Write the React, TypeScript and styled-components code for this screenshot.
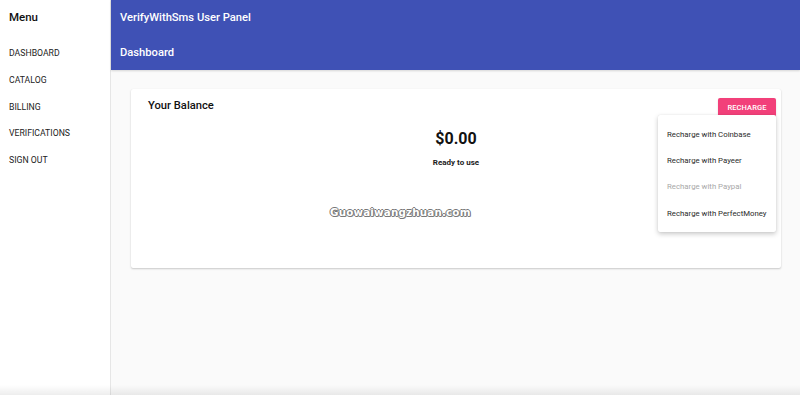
import React from "react";
import styled, { createGlobalStyle } from "styled-components";

const Global = createGlobalStyle`
  html, body { margin: 0; padding: 0; height: 100%; }
  body { font-family: Roboto, "Liberation Sans", Arial, sans-serif; background: #fafafa; overflow: hidden; }
  #root { height: 100%; }
`;

const Page = styled.div`
  display: flex;
  height: 395px;
  width: 800px;
  position: relative;
`;

const Sidebar = styled.aside`
  width: 110px;
  flex: none;
  background: #fff;
  border-right: 1px solid #e6e6e6;
  display: flex;
  flex-direction: column;
`;

const MenuTitle = styled.div`
  font-size: 11.5px;
  font-weight: 500;
  color: #111;
  padding: 10px 0 0 9px;
  height: 40px;
  box-sizing: border-box;
`;

const NavItem = styled.a`
  display: flex;
  align-items: center;
  height: 26.7px;
  padding-left: 9px;
  font-size: 8.7px;
  color: #222;
  text-transform: uppercase;
  text-decoration: none;
`;

const Main = styled.main`
  flex: 1;
  display: flex;
  flex-direction: column;
  background: #fafafa;
`;

const Header = styled.header`
  background: #3f51b5;
  height: 70px;
  display: flex;
  flex-direction: column;
  padding-left: 9px;
  box-sizing: border-box;
  box-shadow: 0 1px 2px rgba(0,0,0,0.15);
`;

const HeaderRow = styled.div<{ $h: number }>`
  height: ${(p) => p.$h}px;
  display: flex;
  align-items: center;
  color: #fff;
  font-size: 11.2px;
  font-weight: 500;
`;

const Content = styled.div`
  padding: 19px 19px 0 20px;
`;

const Card = styled.section`
  position: relative;
  background: #fff;
  height: 179px;
  border-radius: 2px;
  box-shadow: 0 1px 2px rgba(0,0,0,0.2), 0 0 1px rgba(0,0,0,0.06);
  display: flex;
  flex-direction: column;
`;

const CardHeader = styled.div`
  display: flex;
  justify-content: space-between;
  align-items: flex-start;
  padding: 6px 5px 0 17px;
`;

const CardTitle = styled.h2`
  margin: 0;
  padding-top: 4px;
  font-size: 11.2px;
  font-weight: 500;
  color: #111;
`;

const RechargeWrap = styled.div`
  position: relative;
`;

const RechargeButton = styled.button`
  width: 58px;
  height: 19px;
  background: #f2407a;
  border: none;
  border-radius: 2px;
  color: #fff;
  font-family: inherit;
  font-size: 7.5px;
  font-weight: 500;
  letter-spacing: 0.1px;
  padding: 0;
  box-shadow: 0 1px 2px rgba(0,0,0,0.15);
`;

const Dropdown = styled.ul`
  position: absolute;
  right: 0;
  top: 20px;
  width: 118px;
  margin: 0;
  padding: 6px 0 6px;
  list-style: none;
  background: #fff;
  border-radius: 2px;
  box-shadow: 0 2px 5px rgba(0,0,0,0.22), 0 0 1px rgba(0,0,0,0.12);
  z-index: 2;
`;

const DropItem = styled.li<{ $disabled?: boolean }>`
  height: 26.3px;
  display: flex;
  align-items: center;
  padding-left: 9px;
  font-size: 7.8px;
  color: ${(p) => (p.$disabled ? "#a8a8a8" : "#2a2a2a")};
  white-space: nowrap;
`;

const BalanceBlock = styled.div`
  display: flex;
  flex-direction: column;
  align-items: center;
  margin-top: 12px;
`;

const Amount = styled.div`
  font-size: 16px;
  font-weight: 700;
  color: #111;
  line-height: 20px;
`;

const Caption = styled.div`
  margin-top: 9px;
  font-size: 8px;
  font-weight: 700;
  color: #222;
`;

const Watermark = styled.div`
  position: absolute;
  left: 330px;
  top: 206px;
  font-family: "DejaVu Sans", Verdana, sans-serif;
  font-size: 10.3px;
  font-weight: 700;
  color: #fff;
  letter-spacing: 0.2px;
  text-shadow: -1px 0 #777, 1px 0 #777, 0 -1px #777, 0 1px #777, 1px 1px #999;
  pointer-events: none;
`;

const BottomFade = styled.div`
  position: absolute;
  left: 0;
  right: 0;
  bottom: 0;
  height: 10px;
  background: linear-gradient(to bottom, rgba(0,0,0,0), rgba(0,0,0,0.07));
  pointer-events: none;
`;

const navItems = ["Dashboard", "Catalog", "Billing", "Verifications", "Sign out"];
const options = [
  { label: "Recharge with Coinbase" },
  { label: "Recharge with Payeer" },
  { label: "Recharge with Paypal", disabled: true },
  { label: "Recharge with PerfectMoney" },
];

export default function App() {
  return (
    <>
      <Global />
      <Page>
        <Sidebar>
          <MenuTitle>Menu</MenuTitle>
          {navItems.map((n) => (
            <NavItem key={n}>{n}</NavItem>
          ))}
        </Sidebar>
        <Main>
          <Header>
            <HeaderRow $h={34}>VerifyWithSms User Panel</HeaderRow>
            <HeaderRow $h={36}>Dashboard</HeaderRow>
          </Header>
          <Content>
            <Card>
              <CardHeader>
                <CardTitle>Your Balance</CardTitle>
                <RechargeWrap>
                  <RechargeButton>RECHARGE</RechargeButton>
                  <Dropdown>
                    {options.map((o) => (
                      <DropItem key={o.label} $disabled={o.disabled}>
                        {o.label}
                      </DropItem>
                    ))}
                  </Dropdown>
                </RechargeWrap>
              </CardHeader>
              <BalanceBlock>
                <Amount>$0.00</Amount>
                <Caption>Ready to use</Caption>
              </BalanceBlock>
            </Card>
          </Content>
        </Main>
        <Watermark>Guowaiwangzhuan.com</Watermark>
        <BottomFade />
      </Page>
    </>
  );
}
